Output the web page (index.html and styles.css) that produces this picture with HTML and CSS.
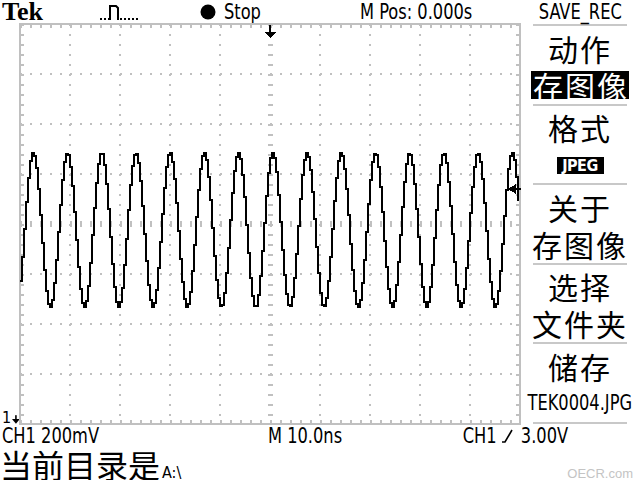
FILE: index.html
```html
<!DOCTYPE html>
<html>
  <head>
    <title>TDS Save</title>
    <meta charset="UTF-8" />
    <link rel="stylesheet" href="styles.css">
  </head>

  <body>
    <div class="scope">
      <div class="top">
        <div class="cell cell-logo"><span class="logo">Tek</span></div>
        <div class="cell cell-acq">
          <svg class="acq-icon" width="38" height="17" viewBox="0 0 38 17">
            <line x1="0" y1="15" x2="10" y2="15" class="dots" />
            <path d="M10 16 V2 H16 L18 4 V16" class="pulse" />
            <line x1="20" y1="15" x2="38" y2="15" class="dots" />
          </svg>
        </div>
        <div class="cell cell-run">
          <svg class="run-dot" width="16" height="16" viewBox="0 0 16 16">
            <circle cx="8" cy="8" r="7.5" />
          </svg>
          <span class="nar">Stop</span>
        </div>
        <div class="cell cell-pos"><span class="nar">M Pos: 0.000s</span></div>
        <div class="cell cell-title"><span class="nar mid">SAVE_REC</span></div>
      </div>

      <div class="middle">
        <div class="gutter">
          <div class="ch-mark">
            <span>1</span>
            <svg width="10" height="11" viewBox="0 0 10 11">
              <rect x="4" y="0" width="2" height="6" />
              <polygon points="0,5 10,5 5,11" />
            </svg>
          </div>
        </div>

        <svg class="graticule" width="500" height="400" viewBox="0 0 500 400">
          <g class="grid">
            <!-- dotted divisions -->
            <line x1="50" y1="0" x2="50" y2="400" />
            <line x1="100" y1="0" x2="100" y2="400" />
            <line x1="150" y1="0" x2="150" y2="400" />
            <line x1="200" y1="0" x2="200" y2="400" />
            <line x1="300" y1="0" x2="300" y2="400" />
            <line x1="350" y1="0" x2="350" y2="400" />
            <line x1="400" y1="0" x2="400" y2="400" />
            <line x1="450" y1="0" x2="450" y2="400" />
            <line x1="0" y1="50" x2="500" y2="50" />
            <line x1="0" y1="100" x2="500" y2="100" />
            <line x1="0" y1="150" x2="500" y2="150" />
            <line x1="0" y1="250" x2="500" y2="250" />
            <line x1="0" y1="300" x2="500" y2="300" />
            <line x1="0" y1="350" x2="500" y2="350" />
          </g>
          <g class="ticks">
            <!-- centre cross -->
            <line x1="250" y1="0" x2="250" y2="400" class="tick-h" />
            <line x1="0" y1="200" x2="500" y2="200" class="tick-v" />
            <!-- edge ticks -->
            <line x1="0" y1="2" x2="500" y2="2" class="tick-v edge" />
            <line x1="0" y1="398" x2="500" y2="398" class="tick-v edge" />
            <line x1="2" y1="0" x2="2" y2="400" class="tick-h edge" />
            <line x1="498" y1="0" x2="498" y2="400" class="tick-h edge" />
          </g>
          <rect class="frame" x="0" y="0" width="500" height="400" />

          <polyline id="trace" class="trace" points="" />

          <!-- trigger position -->
          <rect x="249" y="1" width="2" height="8" class="marker" />
          <polygon points="244,8 257,8 250.5,14" class="marker" />
          <!-- trigger level -->
          <polygon points="488,165 496,160 496,170" class="marker" />
          <rect x="494" y="164" width="7" height="2" class="marker" />
        </svg>

        <div class="menu">
          <div class="item">
            <div class="line">动作</div>
            <div class="line"><span class="selected">存图像</span></div>
          </div>
          <div class="item">
            <div class="line">格式</div>
            <div class="line"><span class="tag">JPEG</span></div>
          </div>
          <div class="item">
            <div class="line">关于</div>
            <div class="line">存图像</div>
          </div>
          <div class="item">
            <div class="line">选择</div>
            <div class="line">文件夹</div>
          </div>
          <div class="item">
            <div class="line">储存</div>
            <div class="line line-file"><span class="nar mid">TEK0004.JPG</span></div>
          </div>
        </div>
      </div>

      <div class="status">
        <div class="st st-ch"><span class="nar">CH1 200mV</span></div>
        <div class="st st-time"><span class="nar">M 10.0ns</span></div>
        <div class="st st-trig">
          <span class="nar">CH1</span>
          <svg class="slope" width="14" height="16" viewBox="0 0 14 16">
            <polyline points="1,14 4,14 11,2" />
          </svg>
          <span class="nar">3.00V</span>
        </div>
      </div>

      <div class="prompt">
        <span class="dir-label">当前目录是</span><span class="dir-path">A:\</span>
        <span class="watermark">OECR.com</span>
      </div>
    </div>

    <script>
// sampled trace: 2px steps, held between samples
let trace = document.getElementById("trace");
let pts = [];
let prev = null;
for (let x = 0; x <= 499; x += 2) {
  let y = Math.round(206 - 77 * Math.cos((2 * Math.PI * (x - 12.5)) / 34.22));
  if (prev !== null) pts.push(x + "," + prev);
  pts.push(x + "," + y);
  prev = y;
}
trace.setAttribute("points", pts.join(" "));
    </script>
  </body>
</html>
```

FILE: styles.css
```css
body {
  margin: 0;
  background: #fff;
  color: #000;
  font-family: "DejaVu Sans", sans-serif;
  font-stretch: condensed;
}

.scope {
  width: 640px;
  height: 480px;
  display: flex;
  flex-direction: column;
  overflow: hidden;
}

/* scope readout font is tall and narrow */
.nar {
  display: inline-block;
  white-space: pre;
  transform: scaleX(0.86);
  transform-origin: left center;
}

.nar.mid {
  transform-origin: center;
}

/* top status bar */
.top {
  height: 24px;
  display: flex;
  font-size: 21px;
  line-height: 22px;
}

.cell {
  display: flex;
  align-items: center;
}

.cell-logo {
  width: 98px;
  padding-left: 2px;
}

.logo {
  font-family: "Liberation Serif", serif;
  font-weight: bold;
  font-size: 26px;
  font-stretch: normal;
  line-height: 24px;
}

.cell-acq {
  width: 100px;
}

.acq-icon .dots {
  stroke: #000;
  stroke-width: 2;
  stroke-dasharray: 2 2;
}

.acq-icon .pulse {
  fill: none;
  stroke: #000;
  stroke-width: 2;
}

.cell-run {
  width: 160px;
  gap: 8px;
}

.run-dot circle {
  fill: #000;
}

.cell-pos {
  width: 160px;
}

.cell-title {
  width: 120px;
  justify-content: center;
}

/* graticule row */
.middle {
  height: 400px;
  display: flex;
}

.gutter {
  width: 20px;
  display: flex;
  flex-direction: column;
  justify-content: flex-end;
}

.ch-mark {
  display: flex;
  align-items: flex-end;
  gap: 1px;
  padding-left: 2px;
  margin-bottom: -1px;
  font-size: 16px;
  line-height: 14px;
}

.ch-mark svg {
  fill: #000;
}

.graticule {
  overflow: visible;
  shape-rendering: crispEdges;
}

.grid line {
  stroke: #c0c0c0;
  stroke-width: 2;
  stroke-dasharray: 2 8;
}

.ticks line {
  stroke: #c0c0c0;
  stroke-dasharray: 2 8;
}

.tick-v {
  stroke-width: 6;
}

.tick-h {
  stroke-width: 5;
}

.tick-v.edge,
.tick-h.edge {
  stroke-width: 4;
}

.frame {
  fill: none;
  stroke: #c0c0c0;
  stroke-width: 2;
}

.trace {
  fill: none;
  stroke: #000;
  stroke-width: 2;
}

.marker {
  fill: #000;
}

/* side menu */
.menu {
  width: 120px;
  display: flex;
  flex-direction: column;
  align-items: center;
}

.item {
  width: 94px;
  height: 80px;
  box-sizing: border-box;
  border-top: 2px solid #c8c8c8;
  padding-top: 3px;
  display: flex;
  flex-direction: column;
  align-items: center;
  font-family: "Noto Sans CJK SC", sans-serif;
  font-size: 30px;
  letter-spacing: 2px;
}

.item:last-child {
  height: 82px;
  border-bottom: 2px solid #c8c8c8;
}

.line {
  height: 37px;
  line-height: 36px;
  white-space: nowrap;
  display: flex;
  align-items: center;
  justify-content: center;
}

.selected {
  background: #000;
  color: #fff;
  line-height: 28px;
  padding: 0 0 0 2px;
}

.tag {
  display: flex;
  align-items: center;
  justify-content: center;
  width: 47px;
  height: 17px;
  margin-top: 2px;
  background: #000;
  color: #fff;
  font-family: "DejaVu Sans", sans-serif;
  font-stretch: condensed;
  font-weight: bold;
  font-size: 16px;
  line-height: 17px;
  letter-spacing: -0.5px;
}

.line-file {
  font-family: "DejaVu Sans", sans-serif;
  font-size: 21px;
  letter-spacing: 0;
}

/* readouts under the graticule */
.status {
  height: 24px;
  display: flex;
  font-size: 21px;
  line-height: 24px;
}

.st-ch {
  width: 266px;
  padding-left: 2px;
}

.st-time {
  width: 192px;
}

.st-trig {
  display: flex;
  align-items: center;
}

.st-trig .nar {
  transform-origin: center;
}

.slope {
  margin: 0 2px;
}

.slope polyline {
  fill: none;
  stroke: #000;
  stroke-width: 1.6;
}

.prompt {
  height: 32px;
  display: flex;
  align-items: baseline;
}

.dir-label {
  font-family: "Noto Sans CJK SC", sans-serif;
  font-size: 32px;
  line-height: 32px;
}

.dir-path {
  font-size: 16px;
  padding-left: 2px;
}

.watermark {
  margin-left: auto;
  margin-right: 7px;
  font-family: "Liberation Sans", sans-serif;
  font-stretch: normal;
  font-size: 13px;
  color: #c4c4c4;
}
```
